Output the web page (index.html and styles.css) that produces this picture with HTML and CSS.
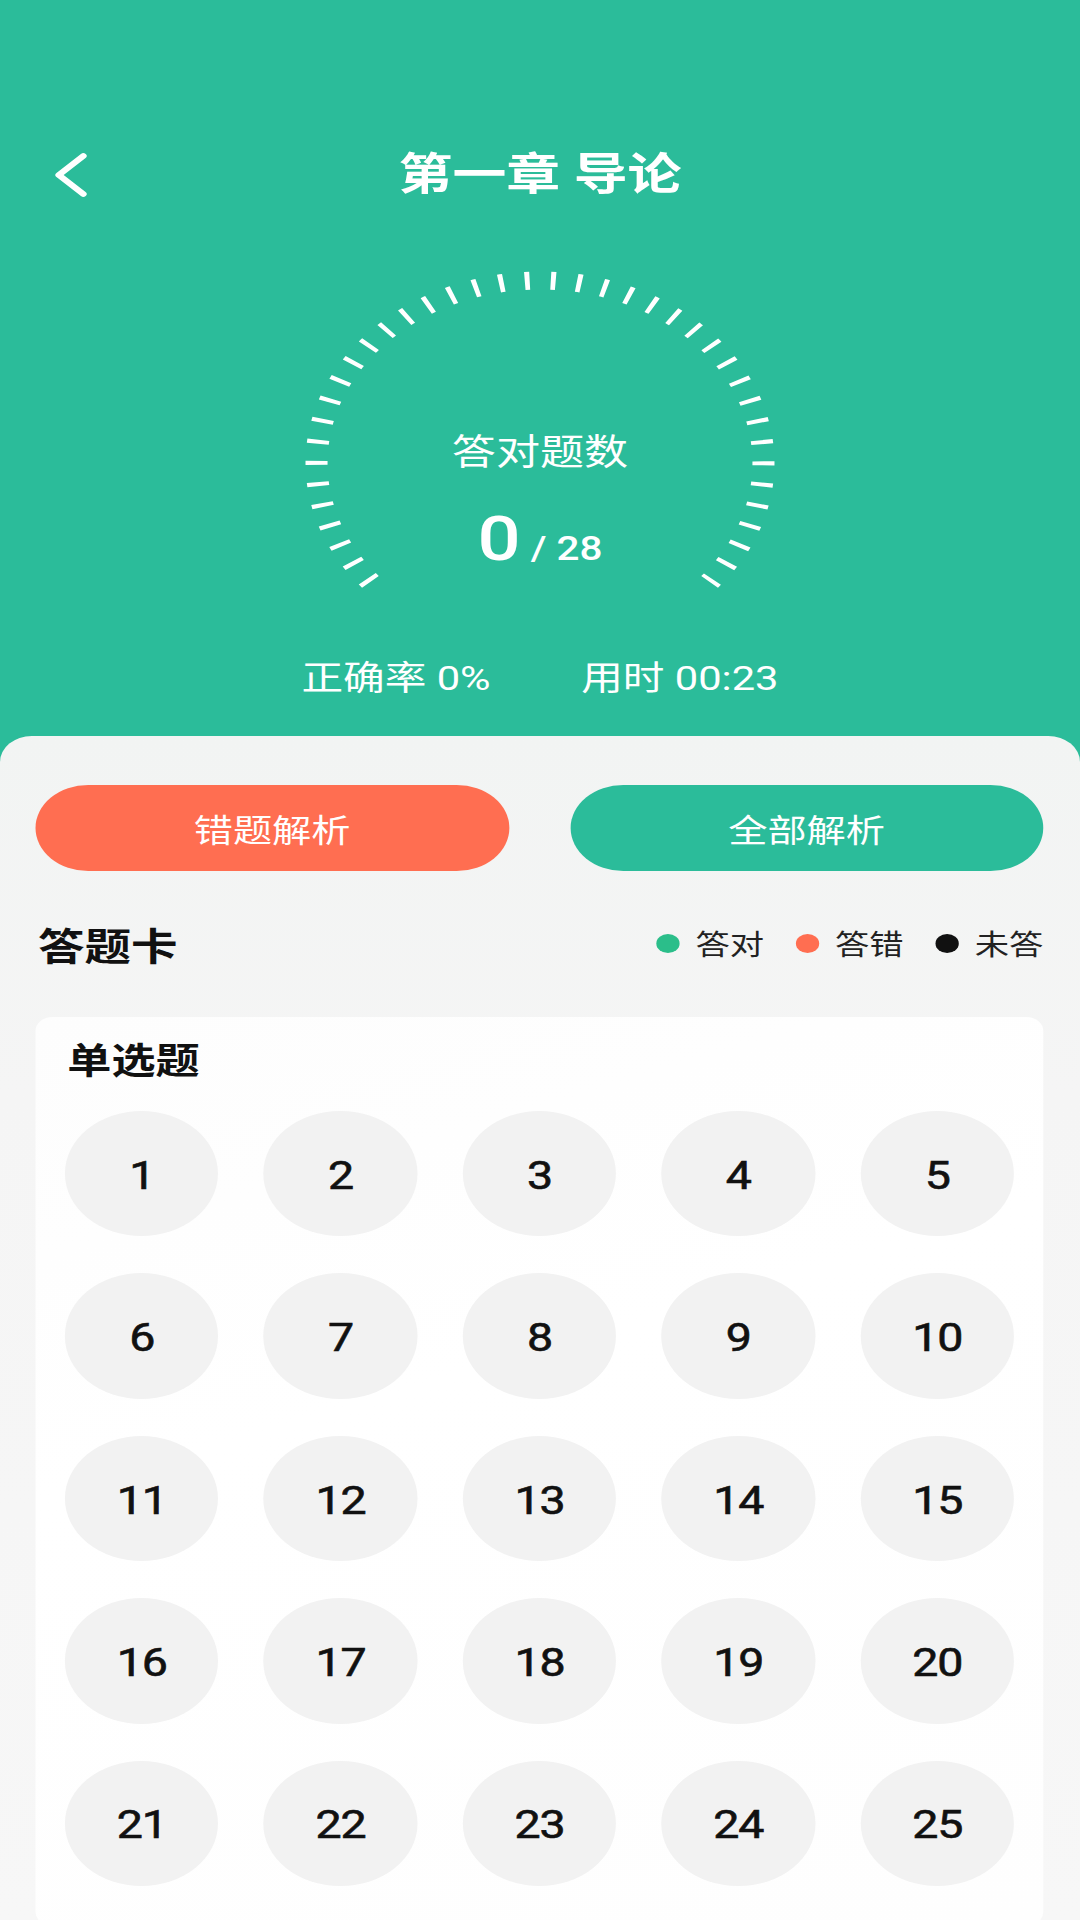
FILE: index.html
```html
<!DOCTYPE html>
<html lang="zh-CN">
<head>
<meta charset="utf-8">
<title>第一章 导论</title>
<link rel="stylesheet" href="styles.css">
</head>
<body>
<div class="app">
  <header class="header">
    <div class="nav">
      <div class="back">
        <svg width="28" height="46" viewBox="0 0 28 46"><path d="M24 4 L4 23 L24 42" fill="none" stroke="#fff" stroke-width="5.5" stroke-linecap="round" stroke-linejoin="round"/></svg>
      </div>
      <div class="title">第一章 导论</div>
      <div></div>
    </div>
    <div class="gauge">
      <svg class="dial" width="400" height="340" viewBox="-200 -200 400 340">
        <path d="M -138.52 118.84 A 182.5 182.5 0 1 1 138.52 118.84" fill="none" stroke="#fff" stroke-width="18" stroke-dasharray="4 17.236"/>
      </svg>
      <div class="gauge-text">
        <div class="gauge-label">答对题数</div>
        <div class="gauge-num"><span class="big">0</span><span class="total"> / 28</span></div>
      </div>
    </div>
    <div class="stats">
      <span>正确率 0%</span>
      <span>用时 00:23</span>
    </div>
  </header>
  <main class="panel">
    <div class="actions">
      <div class="btn btn-wrong">错题解析</div>
      <div class="btn btn-all">全部解析</div>
    </div>
    <div class="card-head">
      <div class="card-title">答题卡</div>
      <div class="legend">
        <div class="legend-item"><span class="dot dot-right"></span>答对</div>
        <div class="legend-item"><span class="dot dot-wrong"></span>答错</div>
        <div class="legend-item"><span class="dot dot-none"></span>未答</div>
      </div>
    </div>
    <section class="card">
      <div class="section-title">单选题</div>
      <div class="grid">
        <div class="q">1</div><div class="q">2</div><div class="q">3</div><div class="q">4</div><div class="q">5</div>
        <div class="q">6</div><div class="q">7</div><div class="q">8</div><div class="q">9</div><div class="q">10</div>
        <div class="q">11</div><div class="q">12</div><div class="q">13</div><div class="q">14</div><div class="q">15</div>
        <div class="q">16</div><div class="q">17</div><div class="q">18</div><div class="q">19</div><div class="q">20</div>
        <div class="q">21</div><div class="q">22</div><div class="q">23</div><div class="q">24</div><div class="q">25</div>
      </div>
    </section>
  </main>
</div>
</body>
</html>
```

FILE: styles.css
```css
html, body {
  margin: 0;
  padding: 0;
  width: 1080px;
  height: 1920px;
  overflow: hidden;
  background: #f6f6f6;
}

.app {
  width: 882px;
  height: 1920px;
  transform: scaleX(1.22449);
  transform-origin: 0 0;
  background: #2bbc9a;
  font-family: Roboto, "Noto Sans CJK SC", sans-serif;
  display: flex;
  flex-direction: column;
  overflow: hidden;
}

/* header */
.header {
  padding: 125px 0 38px;
  color: #fff;
}

.nav {
  display: grid;
  grid-template-columns: 1fr auto 1fr;
  align-items: center;
  height: 100px;
}

.back {
  padding-left: 44px;
  display: flex;
  align-items: center;
}

.title {
  font-size: 44px;
  font-weight: 700;
  line-height: 50px;
}

.gauge {
  display: grid;
  width: 400px;
  height: 340px;
  margin: 38px auto 0;
}

.gauge > * {
  grid-area: 1 / 1;
}

.gauge-text {
  align-self: start;
  text-align: center;
  padding-top: 170px;
}

.gauge-label {
  font-size: 36px;
  line-height: 40px;
}

.gauge-num {
  margin-top: 31px;
  font-size: 62px;
  line-height: 70px;
  height: 70px;
}

.big {
  font-weight: 500;
}

.total {
  font-size: 33px;
  font-weight: 500;
}

.stats {
  display: flex;
  justify-content: center;
  gap: 74px;
  margin-top: 55px;
  font-size: 34px;
  line-height: 40px;
}

/* panel */
.panel {
  flex: 1;
  background: linear-gradient(180deg, #f2f4f3 0%, #f5f5f5 30%, #f7f7f7 100%);
  border-radius: 26px 26px 0 0;
  padding: 49px 30px 0 29px;
}

.actions {
  display: flex;
  gap: 50px;
}

.btn {
  flex: 1;
  height: 86px;
  border-radius: 43px;
  color: #fff;
  font-size: 32px;
  display: flex;
  align-items: center;
  justify-content: center;
}

.btn-wrong {
  background: #ff6e51;
}

.btn-all {
  background: #2bbc9a;
}

.card-head {
  display: flex;
  justify-content: space-between;
  align-items: center;
  margin-top: 50px;
  height: 44px;
}

.card-title {
  font-size: 38px;
  font-weight: 700;
  color: #111;
  padding-left: 2px;
}

.legend {
  display: flex;
  gap: 26px;
  font-size: 28px;
  color: #222;
}

.legend-item {
  display: flex;
  align-items: center;
  gap: 13px;
}

.dot {
  width: 19px;
  height: 19px;
  border-radius: 50%;
}

.dot-right { background: #2bbe8a; }
.dot-wrong { background: #ff6e51; }
.dot-none { background: #111; }

.card {
  margin-top: 52px;
  background: linear-gradient(160deg, #fdfdfd 0%, #ffffff 40%, #fefefe 100%);
  border-radius: 14px;
  padding: 25px 24px 40px;
}

.section-title {
  font-size: 36px;
  font-weight: 700;
  line-height: 40px;
  color: #111;
  padding-left: 2px;
}

.grid {
  display: grid;
  grid-template-columns: repeat(5, 1fr);
  gap: 37px;
  margin-top: 29px;
}

.q {
  aspect-ratio: 1;
  border-radius: 50%;
  background: #f2f2f2;
  display: flex;
  align-items: center;
  justify-content: center;
  padding-top: 4px;
  box-sizing: border-box;
  font-size: 38px;
  font-weight: 400;
  -webkit-text-stroke: 0.6px #111;
  letter-spacing: -1px;
  color: #111;
}
```
